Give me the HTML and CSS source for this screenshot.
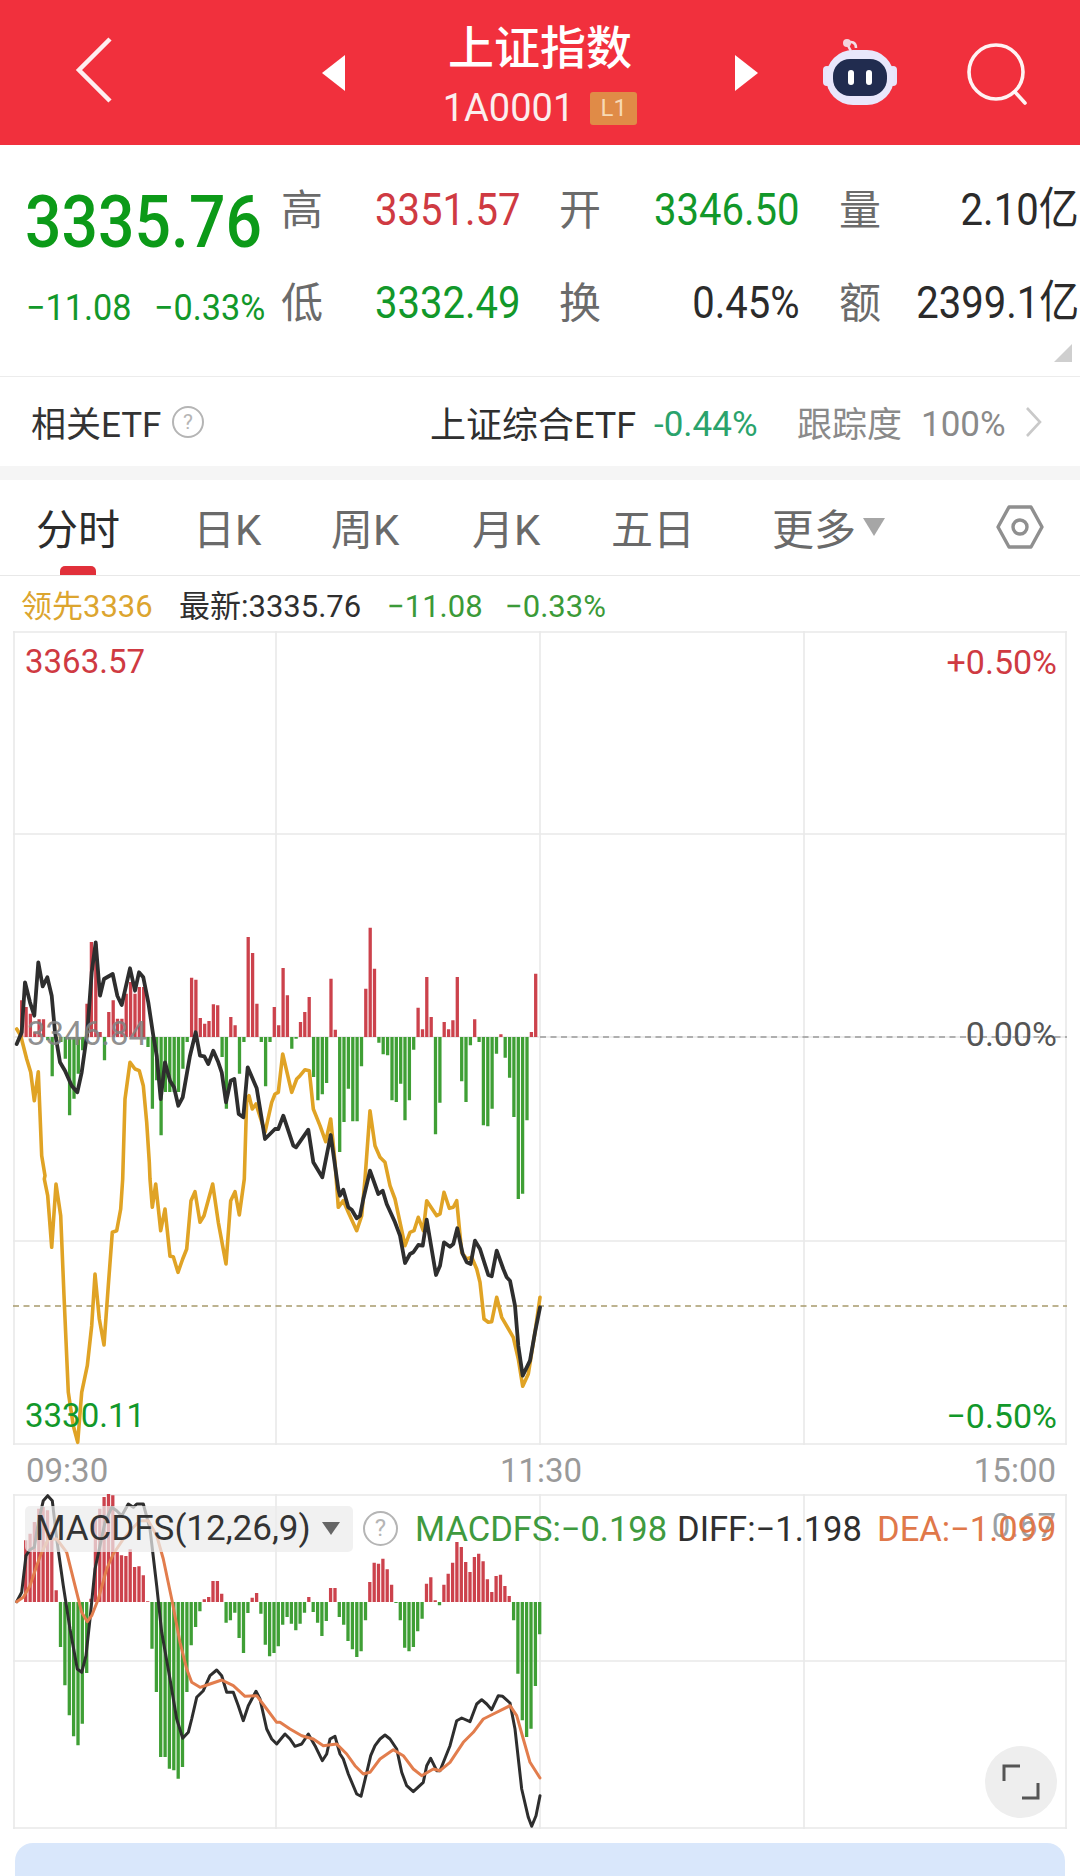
FILE: index.html
```html
<!DOCTYPE html>
<html>
<head>
    <title>上证指数</title>
    <meta charset="UTF-8">
    <meta name="viewport" content="width=device-width, initial-scale=1.0">
    <link rel="stylesheet" href="styles.css">
</head>
<body>
    <header class="topbar">
        <svg class="back-icon" viewBox="0 0 38 66" fill="none"><path d="M35 2 4 33l31 31" stroke="#fff" stroke-width="4.5" stroke-opacity=".92"/></svg>
        <div class="index-switch">
            <span class="arrow arrow-left"></span>
            <div class="index-title">
                <h1>上证指数</h1>
                <div class="index-code">1A0001 <span class="level-badge">L1</span></div>
            </div>
            <span class="arrow arrow-right"></span>
        </div>
        <svg class="robot-icon" viewBox="0 0 76 70">
            <path d="M29 15c-2-3-3-6-4-7" stroke="#f3dfe8" stroke-width="2.5" fill="none"/>
            <path d="M26 7c3-2 8-1 8 5" stroke="#f3dfe8" stroke-width="2.5" fill="none"/>
            <circle cx="25" cy="7" r="4" fill="#f3d5dd"/>
            <rect x="1" y="30" width="8" height="20" rx="4" fill="#e8e4fa"/>
            <rect x="67" y="30" width="8" height="20" rx="4" fill="#e8e4fa"/>
            <rect x="4" y="14" width="68" height="55" rx="27" fill="#e9e7fb"/>
            <rect x="11" y="23" width="54" height="37" rx="17" fill="#212c4f"/>
            <rect x="26" y="34" width="6" height="15" rx="3" fill="#fff"/>
            <rect x="44" y="34" width="6" height="15" rx="3" fill="#fff"/>
        </svg>
        <svg class="search-icon" viewBox="0 0 64 64" fill="none" stroke="#fff" stroke-width="3.6" stroke-opacity=".94"><circle cx="29" cy="29" r="27"/><path d="M48 49 58 60" stroke-linecap="round"/></svg>
    </header>

    <section class="quote">
        <div class="price"><span class="narrow">3335.76</span></div>
        <div class="qlabel">高</div>
        <div class="qvalue red"><span class="narrow-r">3351.57</span></div>
        <div class="qlabel">开</div>
        <div class="qvalue green"><span class="narrow-r">3346.50</span></div>
        <div class="qlabel">量</div>
        <div class="qvalue"><span class="narrow-r">2.10亿</span></div>

        <div class="change"><span class="narrow">−11.08</span><span class="narrow">−0.33%</span></div>
        <div class="qlabel">低</div>
        <div class="qvalue green"><span class="narrow-r">3332.49</span></div>
        <div class="qlabel">换</div>
        <div class="qvalue"><span class="narrow-r">0.45%</span></div>
        <div class="qlabel">额</div>
        <div class="qvalue"><span class="narrow-r">2399.1亿</span></div>
        <span class="corner-mark"></span>
    </section>

    <section class="etf-row">
        <span class="etf-title">相关ETF</span>
        <span class="help-dot">?</span>
        <span class="etf-name">上证综合ETF</span>
        <span class="etf-change">-0.44%</span>
        <span class="etf-track">跟踪度</span>
        <span class="etf-pct">100%</span>
        <svg class="chevron" viewBox="0 0 18 32" fill="none"><path d="M2 2l13 14L2 30" stroke="#c9c9c9" stroke-width="2.6"/></svg>
    </section>

    <nav class="tabs">
        <a class="tab tab-active">分时</a>
        <a class="tab tab-day">日K</a>
        <a class="tab tab-week">周K</a>
        <a class="tab tab-month">月K</a>
        <a class="tab tab-five">五日</a>
        <a class="tab tab-more">更多<span class="more-caret"></span></a>
        <svg class="hex-icon" viewBox="0 0 48 46" fill="none" stroke="#8f8f8f" stroke-width="3.4"><path d="M13 3h22l11 20-11 20H13L2 23z" stroke-linejoin="round"/><circle cx="24" cy="23" r="7"/></svg>
    </nav>

    <div class="info-row">
        <span class="lead">领先3336</span>
        <span class="latest">最新:3335.76</span>
        <span class="info-green">−11.08</span>
        <span class="info-green">−0.33%</span>
    </div>

    <div class="chart chart-main">
        <svg id="mainChart" width="1054" height="814"></svg>
        <span class="axis axis-tl red">3363.57</span>
        <span class="axis axis-tr red">+0.50%</span>
        <span class="axis axis-ml">3346.84</span>
        <span class="axis axis-mr">0.00%</span>
        <span class="axis axis-bl green">3330.11</span>
        <span class="axis axis-br green">−0.50%</span>
    </div>

    <div class="time-row">
        <span>09:30</span>
        <span>11:30</span>
        <span>15:00</span>
    </div>

    <div class="chart chart-macd">
        <svg id="macdChart" width="1054" height="335"></svg>
        <div class="macd-pill">MACDFS(12,26,9)<span class="pill-caret"></span></div>
        <span class="macd-help">?</span>
        <span class="macd-max">0.67</span>
        <div class="macd-legend">
            <span class="legend-macd">MACDFS:−0.198</span>
            <span class="legend-diff">DIFF:−1.198</span>
            <span class="legend-dea">DEA:−1.099</span>
        </div>
        <button class="expand-btn">
            <svg viewBox="0 0 38 38" fill="none" stroke="#555" stroke-width="3"><path d="M2 18V3h16M36 20v15H20"/></svg>
        </button>
    </div>

    <div class="promo-card"></div>

    <script src="chart.js"></script>
</body>
</html>
```

FILE: styles.css
```css
* {
    margin: 0;
    padding: 0;
    box-sizing: border-box;
}

html, body {
    height: 1876px;
    overflow: hidden;
}

body {
    font-family: Roboto, "Noto Sans CJK SC", sans-serif;
    background: #fff;
    color: #2b2b2b;
    width: 1080px;
}

.red { color: #cf3a42; }
.green { color: #12982a; }

/* top bar */
.topbar {
    height: 145px;
    background: #f1303d;
    position: relative;
    display: flex;
    align-items: center;
    padding-left: 75px;
    color: #fff;
}

.back-icon {
    width: 38px;
    height: 66px;
    margin-top: -6px;
}

.index-switch {
    display: flex;
    align-items: center;
    margin-left: 209px;
}

.arrow {
    width: 0;
    height: 0;
    border-top: 18px solid transparent;
    border-bottom: 18px solid transparent;
}

.arrow-left { border-right: 23px solid #fff; }
.arrow-right { border-left: 23px solid #fff; }

.index-title {
    width: 390px;
    display: flex;
    flex-direction: column;
    align-items: center;
    padding-top: 12px;
}

h1 {
    font-size: 46px;
    font-weight: 500;
    line-height: 56px;
    margin-top: -4px;
}

.index-code {
    font-size: 38px;
    line-height: 50px;
    margin-top: 7px;
    display: flex;
    align-items: center;
    gap: 16px;
    color: #fbeeee;
}

.level-badge {
    width: 47px;
    height: 33px;
    background: #e08b47;
    border-radius: 3px;
    font-size: 24px;
    line-height: 33px;
    text-align: center;
    color: #f7d9b5;
}

.robot-icon {
    width: 76px;
    height: 70px;
    margin-left: 64px;
    margin-top: -4px;
}

.search-icon {
    width: 64px;
    height: 64px;
    margin-left: 69px;
    margin-top: 4px;
}

/* quote block */
.quote {
    height: 232px;
    padding-top: 18px;
    position: relative;
    display: grid;
    grid-template-columns: 281px 40px 200px 38px 40px 201px 39px 40px 200px;
    grid-template-rows: 93px 93px;
    align-items: center;
    border-bottom: 1px solid #ececec;
}

.qlabel {
    font-size: 42px;
    line-height: 50px;
    color: #6b6b6b;
    margin-top: 3px;
    white-space: nowrap;
}

.qlabel:nth-child(4), .qlabel:nth-child(11) { grid-column: 5; }
.qlabel:nth-child(6), .qlabel:nth-child(13) { grid-column: 8; }

.qvalue {
    font-size: 45px;
    line-height: 50px;
    justify-self: end;
    white-space: nowrap;
}

.narrow {
    display: inline-block;
    transform: scaleX(0.88);
    transform-origin: left center;
}

.narrow-r {
    display: inline-block;
    transform: scaleX(0.89);
    transform-origin: right center;
}

.price {
    font-size: 73px;
    font-weight: 500;
    color: #0c9a18;
    padding-left: 25px;
    padding-top: 24px;
    line-height: 70px;
    white-space: nowrap;
}

.change {
    font-size: 36px;
    color: #12982a;
    padding-left: 26px;
    padding-top: 10px;
    display: flex;
    white-space: nowrap;
}

.change .narrow {
    width: 129px;
    transform: scaleX(0.95);
}

.corner-mark {
    position: absolute;
    right: 8px;
    bottom: 14px;
    width: 0;
    height: 0;
    border-left: 18px solid transparent;
    border-bottom: 18px solid #cfcfcf;
}

/* etf row */
.etf-row {
    height: 89px;
    padding-left: 31px;
    display: flex;
    align-items: center;
    font-size: 35px;
    white-space: nowrap;
    border-bottom: 14px solid #f5f5f5;
    box-sizing: content-box;
}

.etf-title {
    color: #333;
    width: 131px;
}

.help-dot {
    width: 32px;
    height: 32px;
    margin-left: 10px;
    border: 2px solid #b5b5b5;
    border-radius: 50%;
    font-size: 21px;
    line-height: 28px;
    text-align: center;
    color: #b5b5b5;
}

.etf-name {
    margin-left: 226px;
    color: #2f2f2f;
    font-size: 36px;
    width: 224px;
}

.etf-change {
    color: #2aa36c;
    width: 143px;
    font-size: 35px;
    padding-top: 5px;
}

.etf-track {
    color: #8a8a8a;
    font-size: 35px;
    width: 124px;
}

.etf-pct {
    color: #8a8a8a;
    width: 104px;
    font-size: 35px;
    padding-top: 5px;
}

.chevron {
    width: 18px;
    height: 32px;
}

/* tabs */
.tabs {
    height: 96px;
    position: relative;
    border-bottom: 1px solid #e8e8e8;
    font-size: 42px;
    color: #6a6a6a;
}

.tab {
    position: absolute;
    top: 26px;
    line-height: 50px;
    white-space: nowrap;
}

.tab-active { left: 36px; color: #2c2c2c; }
.tab-day { left: 193px; }
.tab-week { left: 331px; }
.tab-month { left: 472px; }
.tab-five { left: 611px; }
.tab-more { left: 772px; }

.tab-active::after {
    content: '';
    position: absolute;
    left: 24px;
    top: 60px;
    width: 36px;
    height: 9px;
    background: #e1303a;
    border-radius: 5px 5px 0 0;
}

.more-caret {
    position: absolute;
    left: 91px;
    top: 12px;
    width: 0;
    height: 0;
    border-left: 11px solid transparent;
    border-right: 11px solid transparent;
    border-top: 18px solid #a6a6a6;
}

.hex-icon {
    position: absolute;
    left: 996px;
    top: 24px;
    width: 48px;
    height: 46px;
}

/* info row above chart */
.info-row {
    height: 55px;
    padding-left: 21px;
    display: flex;
    align-items: center;
    font-size: 31px;
    white-space: nowrap;
}

.lead { color: #dca52f; width: 158px; }
.latest { color: #2f2f2f; width: 208px; }
.info-green { color: #3b9a38; width: 118px; padding-top: 5px; }

/* charts */
.chart {
    position: relative;
    margin-left: 13px;
    width: 1054px;
}

.chart svg {
    display: block;
}

.chart-main { height: 814px; }
.chart-macd { height: 335px; }

.axis {
    position: absolute;
    font-size: 34px;
    line-height: 40px;
}

.axis-tl { left: 12px; top: 11px; font-size: 33px; }
.axis-tr { right: 10px; top: 11px; }
.axis-ml { left: 14px; top: 383px; color: rgba(130, 130, 130, 0.9); font-size: 33px; }
.axis-mr { right: 10px; top: 383px; color: #555; }
.axis-bl { left: 12px; top: 765px; font-size: 33px; }
.axis-br { right: 10px; top: 765px; }

.time-row {
    height: 49px;
    padding: 2px 24px 0 26px;
    display: flex;
    justify-content: space-between;
    align-items: center;
    font-size: 33px;
    color: #9a9a9a;
}

.macd-pill {
    position: absolute;
    left: 12px;
    top: 12px;
    width: 328px;
    height: 46px;
    padding-left: 10px;
    background: rgba(236, 236, 236, 0.72);
    border-radius: 5px;
    font-size: 35px;
    line-height: 46px;
    color: #333;
    white-space: nowrap;
}

.pill-caret {
    position: absolute;
    left: 297px;
    top: 16px;
    width: 0;
    height: 0;
    border-left: 9px solid transparent;
    border-right: 9px solid transparent;
    border-top: 13px solid #666;
}

.macd-help {
    position: absolute;
    left: 350px;
    top: 17px;
    width: 35px;
    height: 35px;
    border: 2px solid #b5b5b5;
    border-radius: 50%;
    font-size: 24px;
    line-height: 31px;
    text-align: center;
    color: #b5b5b5;
}

.macd-max {
    position: absolute;
    right: 11px;
    top: 12px;
    font-size: 33px;
    line-height: 40px;
    color: #9aa0a4;
}

.macd-legend {
    position: absolute;
    left: 402px;
    top: 15px;
    line-height: 40px;
    font-size: 34.5px;
    display: flex;
    white-space: nowrap;
}

.legend-macd { color: #3f9a3f; width: 262px; }
.legend-diff { color: #2f2f2f; width: 200px; }
.legend-dea { color: #e0784a; }

.expand-btn {
    position: absolute;
    left: 972px;
    top: 252px;
    width: 72px;
    height: 72px;
    border: none;
    border-radius: 50%;
    background: #eeeeee;
    display: flex;
    align-items: center;
    justify-content: center;
}

.expand-btn svg {
    width: 38px;
    height: 38px;
}

.promo-card {
    margin: 14px 15px 0;
    height: 60px;
    background: #d9e7fb;
    border-radius: 18px 18px 0 0;
}
```

FILE: chart.js
```js
// Chart data was traced off 3x crops, so points are written in crop pixels
// and mapped back to real ones here.
const NS = 'http://www.w3.org/2000/svg';

function add(svg, tag, attrs) {
    const el = document.createElementNS(NS, tag);
    for (const k in attrs) el.setAttribute(k, attrs[k]);
    svg.appendChild(el);
    return el;
}

function gridLines(svg, xs, ys, w, h) {
    let d = '';
    xs.forEach(x => { d += `M${x} 0V${h}`; });
    ys.forEach(y => { d += `M0 ${y}H${w}`; });
    add(svg, 'path', { d: d, stroke: '#e9e9e9', 'stroke-width': 1.6, fill: 'none' });
}

function dashed(svg, x1, x2, y, color) {
    add(svg, 'path', { d: `M${x1} ${y}H${x2}`, stroke: color, 'stroke-width': 1.6, 'stroke-dasharray': '6 4.5' });
}

// each crop: [x offset, y offset, [x, y, x, y, ...]]
function trace(svg, crops, top, color, width) {
    const pts = [];
    crops.forEach(([ox, oy, list]) => {
        for (let i = 0; i < list.length; i += 2) {
            const x = ox + list[i] / 3 - 13;
            const y = oy + list[i + 1] / 3 - top;
            pts.push(x.toFixed(1) + ',' + y.toFixed(1));
        }
    });
    add(svg, 'polyline', {
        points: pts.join(' '), fill: 'none', stroke: color,
        'stroke-width': width, 'stroke-linejoin': 'round', 'stroke-linecap': 'round'
    });
}

function bars(svg, heights, startX, baseY) {
    let up = '', down = '';
    heights.forEach((h, i) => {
        const x = (startX + i * 4.356 - 13).toFixed(1);
        const seg = `M${x} ${baseY}V${(baseY - h / 3).toFixed(1)}`;
        if (h > 0) up += seg; else down += seg;
    });
    add(svg, 'path', { d: up, stroke: '#cc424c', 'stroke-width': 3.3, fill: 'none' });
    add(svg, 'path', { d: down, stroke: '#3f9f35', 'stroke-width': 3.3, fill: 'none' });
}

// main chart
const volume = [110,90,70,15,53,53,-10,-118,-20,-15,-65,-235,-185,-110,-40,100,285,280,15,-70,75,110,55,55,130,165,130,150,150,-30,
    -215,-130,-295,-165,-165,-165,-165,-95,-15,178,172,57,40,48,98,95,-60,-215,60,35,-110,-15,300,252,100,-15,-148,-15,90,35,
    207,125,-35,-5,45,75,120,-120,-190,-172,-138,175,22,-345,-255,-155,-253,-253,-88,145,328,205,-17,-52,-55,-190,-195,-140,-250,-190,
    -38,88,23,180,60,-292,-197,45,23,50,180,-133,-195,-25,53,-15,-265,-268,-215,-50,8,-62,-122,-240,-486,-470,-250,15,190];

const goldLine = [
    [0, 900, [50,390,62,410,70,440,80,480,92,520,103,605,115,518,125,770,135,830]],
    [0, 1180, [133,0,143,50,155,205,168,15,182,110,192,350,205,640,220,740,233,790,245,640,262,560,275,440,285,285,298,420,312,498,325,320,337,160,350,155,362,90,368,0]],
    [0, 900, [375,600,390,490,405,510,418,515,430,560,440,670,448,790]],
    [0, 1180, [450,0,457,85,467,15,482,155,495,90,510,232,520,233,534,280,548,240,560,210,573,65,585,38,600,130,612,110,638,15,655,130,678,255,692,65,705,38,718,108,733,0]],
    [0, 900, [740,600,747,590,757,630,768,615,795,700,815,610,825,585,835,580,848,465,875,580,890,540,900,530]],
    [280, 900, [75,512,88,515,100,630,120,680,137,728,152,660,165,790]],
    [280, 1180, [175,85,190,65,205,100,230,155,245,110,255,0]],
    [280, 900, [270,635,285,740,300,775,315,790,330,860]],
    [280, 1180, [345,60,375,200,390,160,402,155,415,115,430,155,440,65,470,110,480,105,492,40,508,88,520,85,530,65,545,220,560,240,575,235,590,270,600,310,612,420,625,430,635,428,650,355,665,415,700,475,715,540,728,622,745,585,765,460,780,355]]
];

const blackLine = [
    [0, 900, [50,435,65,400,75,250,90,310,103,350,115,190,128,262,142,235,155,290,165,400,180,490,195,515,215,560,232,580,245,520,262,400,275,220,287,130,300,290,312,240,338,225,352,290,365,318,390,208,405,275,417,220,430,235,445,310,460,410,470,470,482,600,495,490,510,545,522,565,535,620,548,595,570,470,587,400,600,470,613,472,625,495,640,455,655,490,665,520,678,610,692,545,703,540,716,645,730,655,743,505,770,568,795,720,825,690,835,690]],
    [280, 900, [10,650,40,740,48,745,85,692,100,790,127,835,152,708]],
    [280, 1180, [175,30,180,50,190,32,205,85,215,92,230,118,240,110,250,60,270,-25,295,45,308,35,320,75,345,130,360,170,375,252,390,225,400,220,415,198,428,200,440,122,468,288,480,260,492,190,510,203,520,195,532,148,548,225,560,250,572,255,585,185,600,210,625,288,635,292,650,215,670,270,680,295,690,305,705,380,715,500,728,590,750,545,765,460,780,385]]
];

const mainSvg = document.getElementById('mainChart');
gridLines(mainSvg, [1, 263, 527, 791, 1053], [1, 203, 406, 610, 813], 1054, 814);
dashed(mainSvg, 527, 1054, 406, '#9a9a9a');
dashed(mainSvg, 0, 1054, 675, '#a89a6c');
bars(mainSvg, volume, 21.7, 406);
trace(mainSvg, goldLine, 632, '#e0a325', 3.6);
trace(mainSvg, blackLine, 632, '#2e2e2e', 3.8);

// macd chart, bars given as their tip in crop pixels (axis at 370)
const macdTips = [185,165,130,90,85,95,160,335,505,620,710,773,800,735,583,360,115,90,55,45,50,220,230,232,212,265,263,290,368,
    510,640,835,835,870,875,900,865,640,500,445,398,362,355,307,307,345,432,425,402,478,523,403,357,343,
    405,498,533,523,503,438,415,435,455,435,402,355,400,432,472,427,328,328,415,438,487,512,535,518,425,
    310,252,255,240,272,318,373,425,507,518,505,458,420,315,296,365,380,318,285,252,190,205,250,280,235,225,248,302,340,292,288,322,352,
    425,585,725,775,750,622,467];

const diffLine = [
    [0, 1480, [50,368,65,340,78,230,90,212,103,205,115,130,130,65,143,50,157,65,170,180,190,320,210,450,232,570,245,580,258,530,270,420,285,270,300,200,315,130,335,85,350,95,365,110,385,75,400,85,410,75,430,75,450,150,470,320,485,460,510,600,530,720,548,778,565,760,575,720,590,655,610,635,630,590,650,573,665,590,680,640,700,640,715,680,730,725,745,680,768,637,780,660,800,750,815,780,830,795]],
    [280, 1480, [15,765,30,780,45,802,65,795,85,765,105,800,127,845,140,825,150,780,165,772,180,825,190,840,205,885,230,945,243,952,258,890,272,830,285,800,300,780,315,768,330,780,350,810,365,880,380,920,400,938,430,910,440,860,452,838,470,875,480,875,510,800,530,725,545,717,570,728,590,675,605,662,620,675,635,692,655,650,668,652,690,672,705,750,725,930,745,1015,755,1042,768,1010,780,950]]
];

const deaLine = [
    [0, 1480, [50,368,70,355,90,320,110,260,125,220,145,180,170,180,200,220,225,320,245,400,262,428,275,410,295,360,320,270,340,225,370,180,395,150,420,125,445,125,470,170,490,240,515,360,540,490,560,570,575,610,600,625,630,615,665,603,700,620,735,652,770,650,800,690,830,730]],
    [280, 1480, [0,730,30,750,65,770,100,780,130,800,170,795,200,825,225,860,250,885,270,880,300,840,340,812,370,830,400,870,425,890,460,870,480,875,510,850,550,790,580,760,610,720,640,705,690,680,710,710,730,780,750,850,780,897]]
];

const macdSvg = document.getElementById('macdChart');
gridLines(macdSvg, [1, 263, 527, 791, 1053], [1, 167, 334], 1054, 335);
bars(macdSvg, macdTips.map(t => 370 - t), 25.7, 108);
trace(macdSvg, diffLine, 1495, '#2e2e2e', 3);
trace(macdSvg, deaLine, 1495, '#e27d4d', 3);
```
